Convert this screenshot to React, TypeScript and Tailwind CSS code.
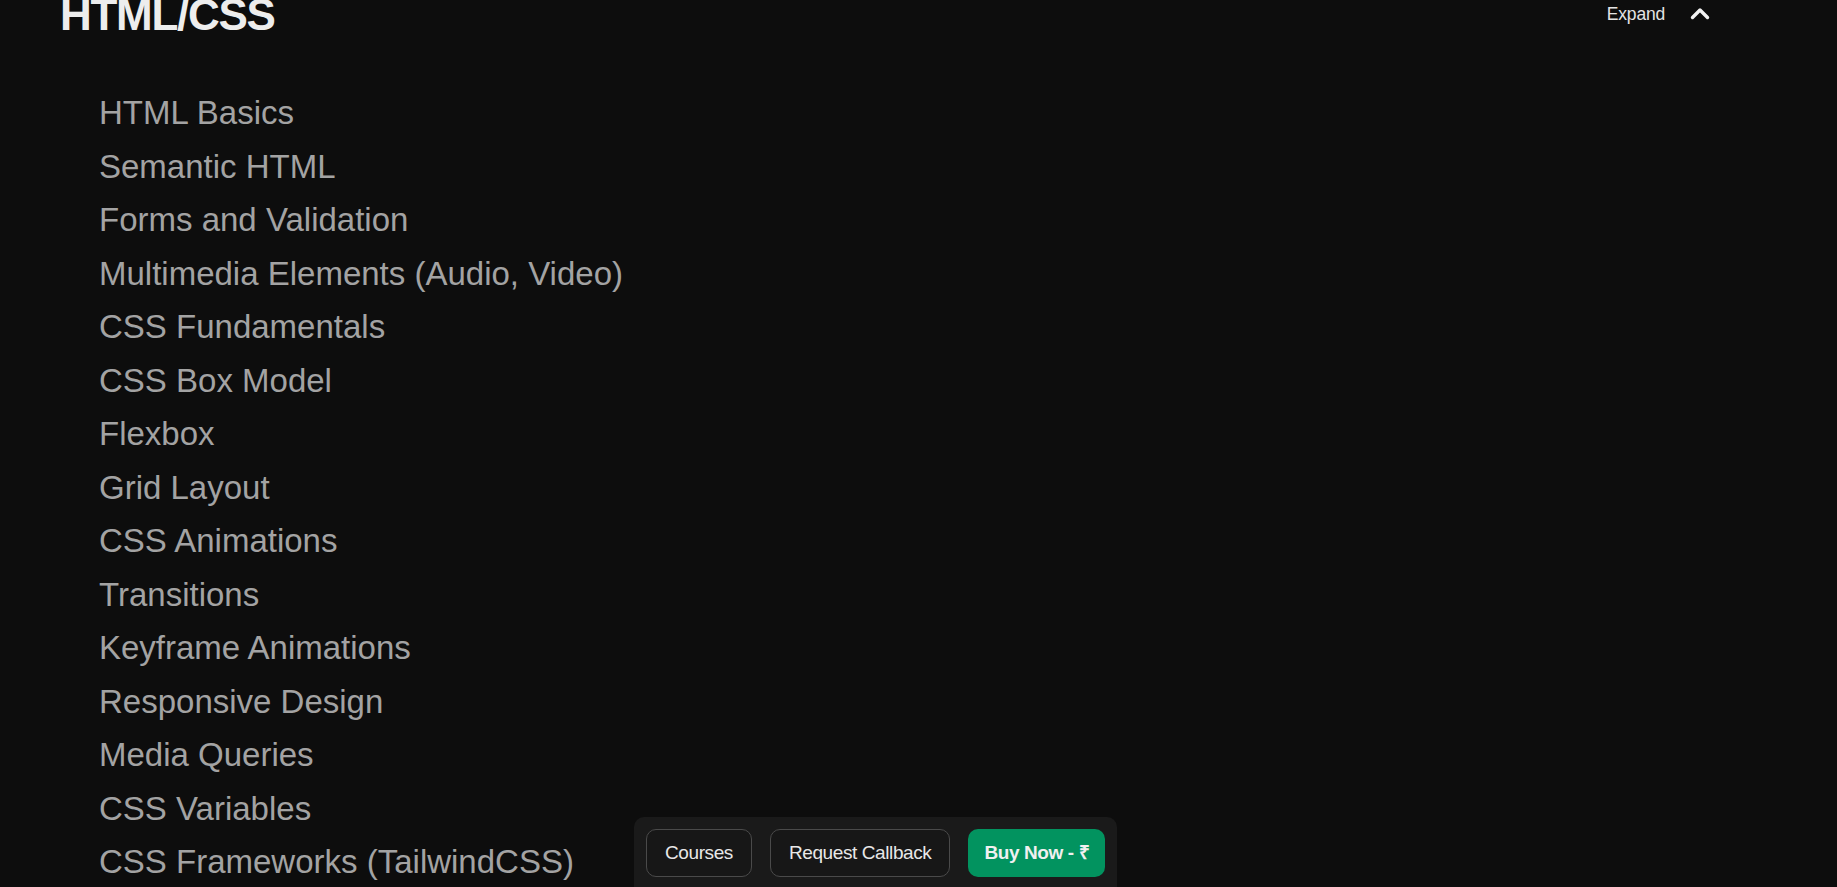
import React from "react";

const topics = [
  "HTML Basics",
  "Semantic HTML",
  "Forms and Validation",
  "Multimedia Elements (Audio, Video)",
  "CSS Fundamentals",
  "CSS Box Model",
  "Flexbox",
  "Grid Layout",
  "CSS Animations",
  "Transitions",
  "Keyframe Animations",
  "Responsive Design",
  "Media Queries",
  "CSS Variables",
  "CSS Frameworks (TailwindCSS)",
];

export default function App() {
  return (
    <div
      className="h-screen overflow-hidden bg-[#0d0d0d] pl-[60px]"
      style={{ fontFamily: '"Liberation Sans", Arial, sans-serif' }}
    >
      <div className="flex items-start justify-between">
        <h2 className="-mt-[7px] text-[44px] font-bold leading-[44px] tracking-[-1.3px] text-[#ededed]">
          HTML/CSS
        </h2>
        <div className="mr-[127px] flex h-[26px] items-center gap-[25px]">
          <span className="mt-[2px] text-[17.5px] leading-[20px] tracking-[-0.2px] text-[#e4e4e4]">
            Expand
          </span>
          <svg width="20" height="13" viewBox="0 0 20 13" fill="none">
            <path
              d="M2.5 10.5 L10 3 L17.5 10.5"
              stroke="#f2f2f2"
              strokeWidth="3.4"
              strokeLinecap="round"
              strokeLinejoin="round"
            />
          </svg>
        </div>
      </div>

      <ul className="mt-[49px] pl-[39px]">
        {topics.map((t) => (
          <li
            key={t}
            className="text-[33px] leading-[53.5px] text-[#a3a3a3]"
          >
            {t}
          </li>
        ))}
      </ul>

      <div className="fixed bottom-0 left-[634px] flex gap-[18px] rounded-t-[10px] bg-[#1a1a1a] px-[12px] pb-[10px] pt-[12px]">
        <button className="h-[48px] rounded-[10px] border border-[#4a4a4a] bg-[#171717] px-[18px] text-[19px] tracking-[-0.4px] text-[#e8e8e8]">
          Courses
        </button>
        <button className="h-[48px] rounded-[10px] border border-[#4a4a4a] bg-[#171717] px-[18px] text-[19px] tracking-[-0.4px] text-[#e8e8e8]">
          Request Callback
        </button>
        <button className="h-[48px] rounded-[10px] bg-[#02935f] px-[16px] text-[19px] font-bold tracking-[-0.4px] text-[#f0f0f0]">
          Buy Now - ₹
        </button>
      </div>
    </div>
  );
}
